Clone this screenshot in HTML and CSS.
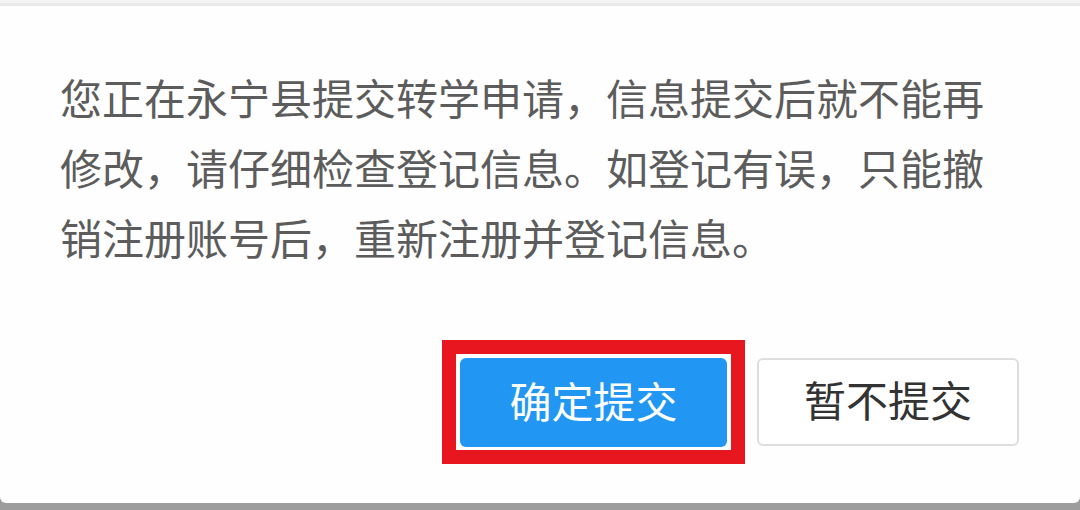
FILE: index.html
```html
<!DOCTYPE html>
<html lang="zh-CN">
<head>
<meta charset="utf-8">
<title>提交确认</title>
<link rel="stylesheet" href="styles.css">
</head>
<body>
<div class="screen">
  <div class="topband"></div>
  <div class="dialog">
    <p class="message">您正在永宁县提交转学申请，信息提交后就不能再修改，请仔细检查登记信息。如登记有误，只能撤销注册账号后，重新注册并登记信息。</p>
    <div class="actions">
      <div class="highlight">
        <button class="btn btn-primary">确定提交</button>
      </div>
      <button class="btn btn-default">暂不提交</button>
    </div>
  </div>
</div>
</body>
</html>
```

FILE: styles.css
```css
* { box-sizing: border-box; }
html, body {
  margin: 0;
  padding: 0;
  width: 1080px;
  height: 510px;
  overflow: hidden;
  background: #9d9d9d;
  font-family: "Noto Sans CJK SC", "Noto Sans", sans-serif;
}
.screen {
  display: flex;
  flex-direction: column;
  width: 1080px;
}
.topband {
  height: 6px;
  background: #f4f4f4;
  border-bottom: 3px solid #e9e9e9;
}
.dialog {
  background: #fefefe;
  height: 497px;
  border-radius: 0 0 6px 6px;
  padding: 56px 0 0 0;
  display: flex;
  flex-direction: column;
}
.message {
  margin: 0;
  padding: 0 80px 0 60px;
  font-size: 42px;
  line-height: 70px;
  color: #5c5c5c;
}
.actions {
  display: flex;
  justify-content: flex-end;
  align-items: center;
  gap: 12px;
  margin-top: 68px;
  padding-right: 61px;
}
.highlight {
  display: flex;
  border: 14px solid #e8171f;
  padding: 4px 4px 3px 4px;
  background: #ffffff;
}
.btn {
  font-family: "Noto Sans CJK SC", "Noto Sans", sans-serif;
  font-size: 42px;
  line-height: 1;
  border-radius: 6px;
  display: flex;
  align-items: center;
  justify-content: center;
  padding: 0 0 6px 0;
}
.btn-primary {
  width: 267px;
  height: 89px;
  background: #2196f3;
  color: #ffffff;
  border: none;
}
.btn-default {
  width: 262px;
  height: 88px;
  background: #ffffff;
  color: #333333;
  border: 2px solid #dedede;
}
```
